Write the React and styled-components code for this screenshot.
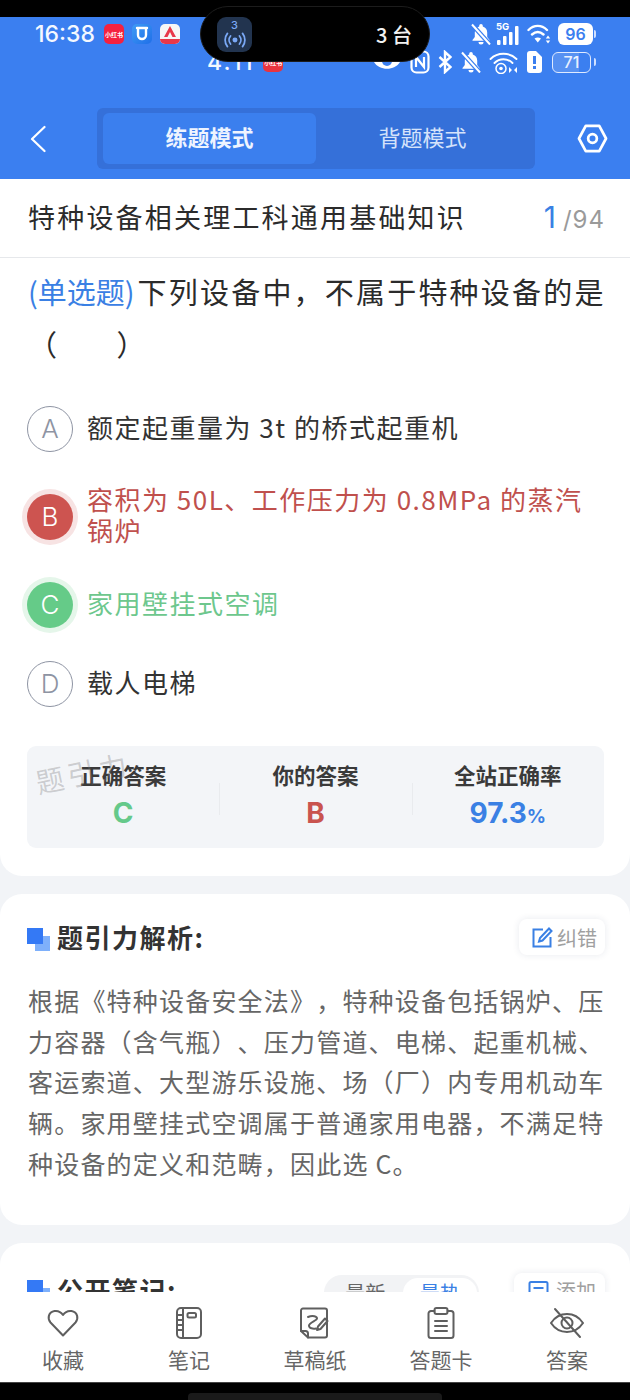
import React from 'react'
import styled, { createGlobalStyle } from 'styled-components'

const GlobalStyle = createGlobalStyle`
  html, body { margin: 0; padding: 0; background: #000; }
  body {
    font-family: "Noto Sans CJK SC", "Noto Sans", sans-serif;
    text-spacing-trim: space-all;
  }
  * { box-sizing: border-box; }
`

const Phone = styled.div`
  position: relative;
  width: 630px;
  height: 1400px;
  display: flex;
  flex-direction: column;
  overflow: hidden;
  background: #f2f4f7;
`

const TopStrip = styled.div`
  height: 17px;
  flex: none;
  background: #000;
`

const Header = styled.header`
  flex: none;
  height: 162px;
  background: #3b7ff0;
  display: flex;
  flex-direction: column;
`

const StatusRow = styled.div`
  height: 30px;
  display: flex;
  align-items: center;
  color: #fff;
  padding: ${p => p.$second ? '0 34px 0 207px' : '4px 34px 0 35px'};
`

const Clock = styled.span`
  font-family: Inter, sans-serif;
  font-size: 23px;
  font-weight: 500;
  letter-spacing: ${p => p.$spaced ? 1.500 : 0}px;
  color: #f4f8ff;
  margin-right: ${p => p.$gap || 10}px;
`

const AppBadge = styled.span`
  width: 20px;
  height: 20px;
  border-radius: 5px;
  margin-right: 8px;
  flex: none;
  display: flex;
  align-items: center;
  justify-content: center;
  background: ${p => p.$bg};
  color: #fff;
  font-size: 6px;
  font-weight: 700;
  overflow: hidden;
  white-space: nowrap;
`

const Spacer = styled.div`
  flex: 1;
`

const StatusIcon = styled.svg`
  flex: none;
  margin-left: ${p => p.$gap || 0}px;
  display: block;
`

const Battery = styled.span`
  flex: none;
  margin-left: ${p => p.$outline ? 9 : 6}px;
  width: ${p => p.$outline ? 39 : 35}px;
  height: ${p => p.$outline ? 21 : 22}px;
  border-radius: 6px;
  font-family: Inter, sans-serif;
  font-size: 16px;
  font-weight: ${p => p.$outline ? 500 : 600};
  display: flex;
  align-items: center;
  justify-content: center;
  color: ${p => p.$outline ? '#e8f0ff' : '#3b7ff0'};
  background: ${p => p.$outline ? 'linear-gradient(90deg, rgba(255,255,255,.14) 71%, transparent 71%)' : '#fff'};
  border: ${p => p.$outline ? '1.5px solid #dfeaff' : 'none'};
`

const BatteryCap = styled.span`
  flex: none;
  width: 2px;
  height: 8px;
  margin-left: ${p => p.$outline ? 3 : 1}px;
  border-radius: 0 2px 2px 0;
  background: #cfe0ff;
`

const Island = styled.div`
  position: absolute;
  left: 200px;
  top: 6px;
  width: 230px;
  height: 56px;
  border-radius: 28px;
  background: #000;
  border: 1px solid #1c1c1c;
  display: flex;
  align-items: center;
  padding: 0 17px 0 16px;
  color: #f2f2f2;
  font-size: 20px;
  font-weight: 500;
`

const IslandApp = styled.div`
  width: 35px;
  height: 35px;
  border-radius: 9px;
  background: #22344f;
  color: #7aa8f5;
  display: flex;
  flex-direction: column;
  align-items: center;
  gap: 1px;
  font-family: Inter, sans-serif;
  font-size: 11px;
  line-height: 11px;
  padding-top: 3px;
`

const NavRow = styled.div`
  height: 61px;
  margin-top: 31px;
  display: flex;
  align-items: center;
  padding: 0 22px 0 30px;
`

const IconButton = styled.button`
  all: unset;
  display: flex;
  flex: none;
`

const ModeSwitch = styled.div`
  width: 438px;
  height: 61px;
  margin: 0 42px 0 51px;
  flex: none;
  border-radius: 6px;
  background: #3570d9;
  padding: 5px 0 5px 6px;
  display: flex;
`

const ModeTab = styled.div`
  width: 213px;
  padding-bottom: 5px;
  border-radius: 6px;
  display: flex;
  align-items: center;
  justify-content: center;
  font-size: 22px;
  font-weight: ${p => p.$active ? 700 : 400};
  color: ${p => p.$active ? '#eef4ff' : '#d5e3fb'};
  background: ${p => p.$active ? '#3b7fee' : 'transparent'};
`

const Scroller = styled.main`
  flex: 1;
  min-height: 0;
  overflow: hidden;
  display: flex;
  flex-direction: column;
  gap: 18px;
`

const Card = styled.section`
  flex: none;
  background: #fff;
  border-radius: ${p => p.$first ? '0 0 22px 22px' : '22px'};
`

const TitleRow = styled.div`
  height: 79px;
  border-bottom: 1px solid #e6e8eb;
  display: flex;
  align-items: center;
  justify-content: space-between;
  padding: 0 25px 3px 28px;
`

const ChapterTitle = styled.h1`
  margin: 0;
  font-size: 27px;
  font-weight: 400;
  letter-spacing: 2.200px;
  color: #2b2b2b;
`

const Counter = styled.div`
  font-family: Inter, sans-serif;
  color: #9a9a9a;
  font-size: 24px;
  letter-spacing: 1px;
  white-space: nowrap;
`

const CounterNow = styled.span`
  color: #3a80e4;
  font-size: 30px;
  margin-right: 6px;
`

const Question = styled.div`
  padding: 7px 20px 0 28px;
  font-size: 29px;
  line-height: 52px;
  letter-spacing: 2.200px;
  color: #2b2b2b;
`

const QuestionType = styled.span`
  color: #3a80e4;
  letter-spacing: 0;
  margin-right: 3px;
`

const AnswerBlank = styled.span`
  letter-spacing: 0.500px;
`

const Options = styled.div`
  padding: 20px 30px 0 27px;
  display: flex;
  flex-direction: column;
`

const Option = styled.div`
  min-height: ${p => p.$tall ? 97 : 79}px;
  display: flex;
  align-items: center;
  gap: 14px;
  font-size: 26px;
  line-height: 31px;
  letter-spacing: 1.500px;
  color: ${p => p.$color || '#333'};
`

const OptionText = styled.span`
  padding-bottom: 5px;
`

const Letter = styled.div`
  flex: none;
  width: 46px;
  height: 46px;
  border-radius: 50%;
  display: flex;
  align-items: center;
  justify-content: center;
  font-family: Inter, sans-serif;
  font-size: 26px;
  letter-spacing: 0;
  font-weight: 300;
  color: ${p => p.$fill ? '#fff' : '#8e94a3'};
  background: ${p => p.$fill || 'transparent'};
  border: ${p => p.$fill ? 'none' : '1.5px solid #8e94a3'};
  box-shadow: ${p => p.$ring ? `0 0 0 5px ${p.$ring}` : 'none'};
`

const Stats = styled.div`
  position: relative;
  margin: 23px 26px 28px 27px;
  height: 102px;
  border-radius: 9px;
  background: #f3f5f8;
  display: grid;
  grid-template-columns: repeat(3, 1fr);
`

const Stat = styled.div`
  display: flex;
  flex-direction: column;
  align-items: center;
  gap: 6px;
  padding-top: 14px;
  background: ${p => p.$divided ? 'linear-gradient(#e9ebee, #e9ebee) 0 37px / 1px 32px no-repeat' : 'none'};
`

const StatLabel = styled.div`
  font-size: 21.500px;
  line-height: 30px;
  font-weight: 700;
  color: #3a3a3a;
`

const StatValue = styled.div`
  font-family: Inter, sans-serif;
  font-size: 28px;
  line-height: 34px;
  font-weight: 700;
  color: ${p => p.$color};
`

const Percent = styled.span`
  font-size: 19px;
`

const Watermark = styled.div`
  position: absolute;
  left: 8px;
  top: 8px;
  font-size: 28px;
  line-height: 36px;
  letter-spacing: 4px;
  color: rgba(120, 120, 120, 0.33);
  transform: rotate(-12deg);
`

const SectionHead = styled.div`
  display: flex;
  align-items: center;
  padding: ${p => p.$compact ? '26px 25px 0 27px' : '25px 25px 0 27px'};
`

const SectionMark = styled.div`
  position: relative;
  width: 23px;
  height: 23px;
  flex: none;
  margin: 4px 7px 0 0;
  background: linear-gradient(#7eb0fb, #7eb0fb) right bottom / 15px 15px no-repeat;

  &::before {
    content: '';
    position: absolute;
    left: 0;
    top: 0;
    width: 16px;
    height: 16px;
    background: #3479f5;
  }
`

const SectionTitle = styled.h2`
  margin: 0;
  flex: 1;
  font-size: 26px;
  line-height: 36px;
  letter-spacing: 1.500px;
  font-weight: 700;
  color: #333;
`

const ActionChip = styled.button`
  all: unset;
  height: 36px;
  margin-top: ${p => p.$wide ? 2 : 0}px;
  padding: ${p => p.$wide ? '0 9px 0 14px' : '0 8px 0 13px'};
  display: flex;
  align-items: center;
  gap: ${p => p.$wide ? 7 : 4}px;
  border-radius: 8px;
  background: #fff;
  box-shadow: 0 0 7px rgba(30, 50, 90, 0.1);
  font-size: 20px;
  color: #a0a0a0;
`

const Analysis = styled.p`
  margin: 0;
  padding: 25px 22px 41px 28px;
  font-size: 25px;
  line-height: 40.700px;
  letter-spacing: 1.200px;
  color: #666;
`

const SortSwitch = styled.div`
  display: flex;
  height: 36px;
  width: 155px;
  margin: 6px 35px 0 0;
  padding: 3px 2px 3px 4px;
  border-radius: 18px;
  background: #f2f3f5;
  font-size: 20px;
`

const SortItem = styled.div`
  flex: 1;
  display: flex;
  align-items: center;
  justify-content: center;
  border-radius: 16px;
  color: ${p => p.$active ? '#3a80e4' : '#666'};
  background: ${p => p.$active ? '#fff' : 'transparent'};
`

const TabBar = styled.nav`
  flex: none;
  height: 90px;
  background: #fff;
  display: grid;
  grid-template-columns: repeat(5, 126px);
  padding-top: 14px;
`

const TabItem = styled.div`
  display: flex;
  flex-direction: column;
  align-items: center;
  gap: 4px;
  font-size: 21px;
  line-height: 30px;
  color: #666;
`

const BottomBar = styled.div`
  flex: none;
  height: 18px;
  background: #000;
  border-top: 1px solid #444;
  display: flex;
  justify-content: center;
`

const HomeIndicator = styled.div`
  width: 254px;
  height: 7px;
  margin-top: 10px;
  border-radius: 4px 4px 0 0;
  background: #1a1a1a;
`

const BellOff = ({ gap }) => (
  <StatusIcon $gap={gap} width="22" height="22" viewBox="0 0 22 22">
    <path d="M11 1a1.800 1.800 0 0 0-1.800 1.800v.6C6.300 4.300 4.800 6.600 4.800 9.500v4.500L2.500 17v.8h17V17l-2.300-3V9.500c0-2.900-1.500-5.200-4.400-6.100v-.6A1.800 1.800 0 0 0 11 1z" fill="#fff" />
    <path d="M8.500 19h5a2.500 2.500 0 0 1-5 0z" fill="#fff" />
    <path d="M2.500 2l17 19" stroke="#3b7ff0" strokeWidth="4.500" />
    <path d="M2 1.500l18 20" stroke="#fff" strokeWidth="2" />
  </StatusIcon>
)

const Wifi = () => (
  <StatusIcon $gap={6} width="25" height="22" viewBox="0 0 25 22" fill="none" stroke="#fff" strokeWidth="2.400" strokeLinecap="round">
    <path d="M1.500 7C7 1.500 14.500 1.500 20 7M5 11.500c3.800-3.400 7.700-3.400 11.500 0" />
    <path d="M7.500 15.500l3.250 4 3.250-4c-2.200-1.400-4.300-1.400-6.500 0z" fill="#fff" stroke="none" />
    <path d="M21 12.500l2.200 3h-4.400zM21 20.500l2.200-3h-4.400z" fill="#fff" stroke="none" />
  </StatusIcon>
)

const Signal = () => (
  <StatusIcon $gap={4} width="25" height="24" viewBox="0 0 25 24" fill="#fff">
    <text x="0" y="8" fontSize="9.500" fontWeight="700" fontFamily="Inter, sans-serif">5G</text>
    <rect x="1" y="18" width="3.500" height="5" rx="1" />
    <rect x="7" y="14" width="3.500" height="9" rx="1" />
    <rect x="13" y="10" width="3.500" height="13" rx="1" />
    <rect x="19" y="4" width="3.500" height="19" rx="1" />
  </StatusIcon>
)

const Eye = () => (
  <StatusIcon width="28" height="24" viewBox="0 0 28 24" fill="#fff">
    <path d="M1 12C6 3 22 3 27 12 22 21 6 21 1 12z" />
    <circle cx="14" cy="11" r="5" fill="#3b7ff0" />
  </StatusIcon>
)

const Nfc = () => (
  <StatusIcon $gap={9} width="20" height="24" viewBox="0 0 20 24" fill="none" stroke="#fff" strokeWidth="2.200">
    <rect x="1.500" y="1.500" width="17" height="21" rx="5" />
    <path d="M6 17V7l8 10V7" />
  </StatusIcon>
)

const Bluetooth = () => (
  <StatusIcon $gap={8} width="14" height="24" viewBox="0 0 14 24" fill="none" stroke="#fff" strokeWidth="2.400">
    <path d="M1.500 7l11 10L7 22V2l5.500 5-11 10" />
  </StatusIcon>
)

const WifiCall = () => (
  <StatusIcon $gap={7} width="29" height="24" viewBox="0 0 29 24" fill="none" stroke="#fff" strokeWidth="1.900" strokeLinecap="round">
    <path d="M1.500 9c7-7 19-7 26 0M5.500 13c5-5 13-5 18 0" />
    <circle cx="12" cy="18.500" r="5" strokeWidth="1.500" />
    <circle cx="12" cy="18.500" r="1.800" fill="#fff" stroke="none" />
    <path d="M20 17l3 3-3 3zM28 17l-3 3 3 3z" fill="#fff" stroke="none" />
  </StatusIcon>
)

const SimAlert = () => (
  <StatusIcon $gap={8} width="17" height="24" viewBox="0 0 17 24" fill="#fff">
    <path d="M4 1h6l6 6v13a3 3 0 0 1-3 3H4a3 3 0 0 1-3-3V4a3 3 0 0 1 3-3z" />
    <rect x="7" y="6" width="3" height="8" fill="#3b7ff0" />
    <rect x="7" y="16" width="3" height="3" fill="#3b7ff0" />
  </StatusIcon>
)

const Back = () => (
  <svg width="16" height="28" viewBox="0 0 16 28" fill="none" stroke="#fff" strokeWidth="2.200" strokeLinecap="round" strokeLinejoin="round">
    <path d="M14.500 2L2 14l12.500 12" />
  </svg>
)

const Settings = () => (
  <svg width="31" height="29" viewBox="0 0 32 30" fill="none" stroke="#fff" strokeWidth="2.800" strokeLinejoin="round">
    <path d="M9 2h14l7 13-7 13H9L2 15z" />
    <circle cx="16" cy="15" r="4.500" />
  </svg>
)

const Broadcast = () => (
  <svg width="26" height="16" viewBox="0 0 26 18" fill="none" stroke="#7aa8f5" strokeWidth="2" strokeLinecap="round">
    <circle cx="13" cy="9" r="2.800" fill="#7aa8f5" stroke="none" />
    <path d="M8 4.500a7 7 0 0 0 0 9M18 4.500a7 7 0 0 1 0 9M4.500 1.500a12 12 0 0 0 0 15M21.500 1.500a12 12 0 0 1 0 15" />
  </svg>
)

const Edit = () => (
  <svg width="21" height="21" viewBox="0 0 21 21" fill="none" stroke="#3a80e4" strokeWidth="2">
    <path d="M11 2.500H1.500v17h17V10" />
    <path d="M17 1.500l2.500 2.500-9 9.500-3.500 1 1-3.500z" />
  </svg>
)

const NoteAdd = () => (
  <svg width="21" height="21" viewBox="0 0 21 21" fill="none" stroke="#3a80e4" strokeWidth="2">
    <rect x="1.500" y="2" width="18" height="17" rx="1.500" />
    <path d="M5.500 8h10M5.500 13h7" />
  </svg>
)

const TabIcon = styled.svg`
  display: block;
  fill: none;
  stroke: #5f5f5f;
  stroke-width: 2;
  stroke-linecap: round;
  stroke-linejoin: round;
`

const Heart = () => (
  <TabIcon width="34" height="34" viewBox="0 0 34 34">
    <path d="M17 29.500L4.500 16.500C1 12.500 2.500 6 8.500 5c3.500-.5 6.500 1 8.500 4 2-3 5-4.500 8.500-4 6 1 7.500 7.500 4 11.500z" />
  </TabIcon>
)

const Notebook = () => (
  <TabIcon width="34" height="34" viewBox="0 0 34 34">
    <rect x="5" y="2" width="24" height="30" rx="4" />
    <path d="M11 2v30M5 9h6M5 14h6M5 19h6M5 24h6" />
    <rect x="15.500" y="7" width="8.500" height="4.500" rx="1.500" />
  </TabIcon>
)

const Draft = () => (
  <TabIcon width="34" height="34" viewBox="0 0 34 34">
    <path d="M5 2.500h22a2 2 0 0 1 2 2v25a2 2 0 0 1-2 2H10L3 25V4.500a2 2 0 0 1 2-2z" />
    <path d="M10 31.500v-4a2.500 2.500 0 0 0-2.500-2.500H3" />
    <path d="M10 11c5-2 9-.5 9 1.500s-8 4-8 7 4 3.500 7 3" />
    <path d="M19 24l1-3.500 7-8 2.500 2.500-7 8z" />
  </TabIcon>
)

const AnswerCard = () => (
  <TabIcon width="34" height="34" viewBox="0 0 34 34">
    <path d="M10.500 5H7a2.500 2.500 0 0 0-2.500 2.500v22A2.500 2.500 0 0 0 7 32h20a2.500 2.500 0 0 0 2.500-2.500v-22A2.500 2.500 0 0 0 27 5h-3.500" />
    <rect x="10.500" y="2" width="13" height="6" rx="2" />
    <path d="M11 15h12M11 20h12M11 25h12" />
  </TabIcon>
)

const EyeOff = () => (
  <TabIcon width="34" height="34" viewBox="0 0 34 34">
    <path d="M1 17C9 5 25 5 33 17 25 29 9 29 1 17z" />
    <circle cx="17" cy="17" r="5.500" />
    <path d="M5 3l25 28" />
  </TabIcon>
)

const tabs = [
  { label: '收藏', icon: <Heart /> },
  { label: '笔记', icon: <Notebook /> },
  { label: '草稿纸', icon: <Draft /> },
  { label: '答题卡', icon: <AnswerCard /> },
  { label: '答案', icon: <EyeOff /> },
]

const options = [
  { key: 'A', text: '额定起重量为 3t 的桥式起重机' },
  { key: 'B', text: '容积为 50L、工作压力为 0.8MPa 的蒸汽锅炉', color: '#c0504d', fill: '#cd5450', ring: '#f7e3e3', tall: true },
  { key: 'C', text: '家用壁挂式空调', color: '#6dc78d', fill: '#65cb88', ring: '#e5f6ea' },
  { key: 'D', text: '载人电梯' },
]

const App = () => (
  <Phone>
    <GlobalStyle />
    <TopStrip />
    <Header>
      <StatusRow>
        <Clock $gap={9}>16:38</Clock>
        <AppBadge $bg="#f5213f">小红书</AppBadge>
        <AppBadge $bg="linear-gradient(135deg, #3f9bf5, #1f6fe8)">
          <svg width="14" height="16" viewBox="0 0 14 16" fill="none" stroke="#fff" strokeWidth="2.400" strokeLinecap="round">
            <path d="M2 2h10M3 2v7a4 4 0 0 0 8 0V2" />
          </svg>
        </AppBadge>
        <AppBadge $bg="#f6f6f6">
          <svg width="20" height="20" viewBox="0 0 20 20">
            <path d="M10 2l6 11h-3.500L10 8l-2.500 5H4z" fill="#e8384a" />
            <rect y="15" width="20" height="5" fill="#e8384a" />
          </svg>
        </AppBadge>
        <Spacer />
        <BellOff />
        <Signal />
        <Wifi />
        <Battery>96</Battery>
        <BatteryCap />
      </StatusRow>
      <StatusRow $second>
        <Clock $spaced $gap={9}>4:11</Clock>
        <AppBadge $bg="#e8343f">小红书</AppBadge>
        <Spacer />
        <Eye />
        <Nfc />
        <Bluetooth />
        <BellOff gap={8} />
        <WifiCall />
        <SimAlert />
        <Battery $outline>71</Battery>
        <BatteryCap $outline />
      </StatusRow>
      <NavRow>
        <IconButton><Back /></IconButton>
        <ModeSwitch>
          <ModeTab $active>练题模式</ModeTab>
          <ModeTab>背题模式</ModeTab>
        </ModeSwitch>
        <IconButton><Settings /></IconButton>
      </NavRow>
    </Header>
    <Island>
      <IslandApp>
        3
        <Broadcast />
      </IslandApp>
      <Spacer />
      3 台
    </Island>
    <Scroller>
      <Card $first>
        <TitleRow>
          <ChapterTitle>特种设备相关理工科通用基础知识</ChapterTitle>
          <Counter><CounterNow>1</CounterNow>/94</Counter>
        </TitleRow>
        <Question>
          <QuestionType>(单选题)</QuestionType>下列设备中，不属于特种设备的是<AnswerBlank>（　　）</AnswerBlank>
        </Question>
        <Options>
          {options.map(o => (
            <Option key={o.key} $color={o.color} $tall={o.tall}>
              <Letter $fill={o.fill} $ring={o.ring}>{o.key}</Letter>
              <OptionText>{o.text}</OptionText>
            </Option>
          ))}
        </Options>
        <Stats>
          <Watermark>题引力</Watermark>
          <Stat>
            <StatLabel>正确答案</StatLabel>
            <StatValue $color="#65c98a">C</StatValue>
          </Stat>
          <Stat $divided>
            <StatLabel>你的答案</StatLabel>
            <StatValue $color="#c9544f">B</StatValue>
          </Stat>
          <Stat $divided>
            <StatLabel>全站正确率</StatLabel>
            <StatValue $color="#3a80e4">97.3<Percent>%</Percent></StatValue>
          </Stat>
        </Stats>
      </Card>
      <Card>
        <SectionHead>
          <SectionMark />
          <SectionTitle>题引力解析:</SectionTitle>
          <ActionChip><Edit />纠错</ActionChip>
        </SectionHead>
        <Analysis>
          根据《特种设备安全法》，特种设备包括锅炉、压力容器（含气瓶）、压力管道、电梯、起重机械、客运索道、大型游乐设施、场（厂）内专用机动车辆。家用壁挂式空调属于普通家用电器，不满足特种设备的定义和范畴，因此选 C。
        </Analysis>
      </Card>
      <Card>
        <SectionHead $compact>
          <SectionMark />
          <SectionTitle>公开笔记:</SectionTitle>
          <SortSwitch>
            <SortItem>最新</SortItem>
            <SortItem $active>最热</SortItem>
          </SortSwitch>
          <ActionChip $wide><NoteAdd />添加</ActionChip>
        </SectionHead>
        <Analysis />
      </Card>
    </Scroller>
    <TabBar>
      {tabs.map(t => (
        <TabItem key={t.label}>
          {t.icon}
          {t.label}
        </TabItem>
      ))}
    </TabBar>
    <BottomBar><HomeIndicator /></BottomBar>
  </Phone>
)

export default App
